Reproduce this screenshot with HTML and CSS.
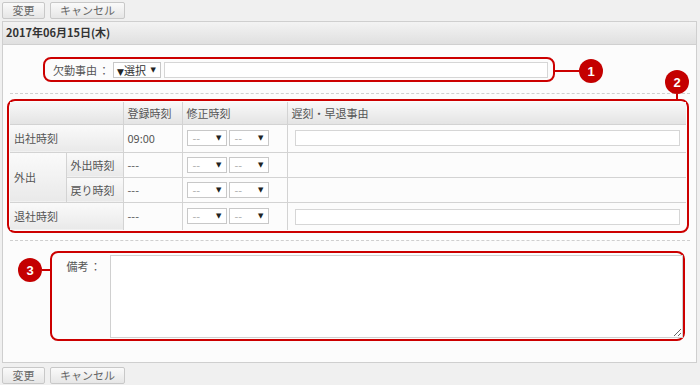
FILE: index.html
```html
<!DOCTYPE html>
<html lang="ja">

<head>
    <meta charset="UTF-8">
    <title>勤怠修正</title>
    <link rel="stylesheet" href="styles.css">
</head>

<body>
    <div class="toolbar">
        <button class="btn">変更</button>
        <button class="btn">キャンセル</button>
    </div>

    <div class="panel">
        <div class="panel-head">2017年06月15日(木)</div>
        <div class="panel-body">

            <div class="mark mark-1">
                <span class="field-label">欠勤事由 ：</span>
                <span class="sel sel-reason"><b>▼</b>選択<i>▼</i></span>
                <input class="text grow" type="text">
                <span class="callout callout-1">1</span>
            </div>

            <div class="dash"></div>

            <div class="mark mark-2">
                <table class="times">
                    <colgroup>
                        <col class="w-out">
                        <col class="w-kind">
                        <col class="w-reg">
                        <col class="w-fix">
                        <col>
                    </colgroup>
                    <tr class="head">
                        <th colspan="2"></th>
                        <th>登録時刻</th>
                        <th>修正時刻</th>
                        <th>遅刻・早退事由</th>
                    </tr>
                    <tr class="r-tall">
                        <th colspan="2" class="lbl">出社時刻</th>
                        <td>09:00</td>
                        <td>
                            <div class="pair">
                                <span class="sel sel-time">--<i>▼</i></span>
                                <span class="sel sel-time">--<i>▼</i></span>
                            </div>
                        </td>
                        <td class="c-why"><input class="text" type="text"></td>
                    </tr>
                    <tr class="r-short">
                        <th rowspan="2" class="lbl">外出</th>
                        <th class="lbl">外出時刻</th>
                        <td>---</td>
                        <td>
                            <div class="pair">
                                <span class="sel sel-time">--<i>▼</i></span>
                                <span class="sel sel-time">--<i>▼</i></span>
                            </div>
                        </td>
                        <td></td>
                    </tr>
                    <tr class="r-short">
                        <th class="lbl">戻り時刻</th>
                        <td>---</td>
                        <td>
                            <div class="pair">
                                <span class="sel sel-time">--<i>▼</i></span>
                                <span class="sel sel-time">--<i>▼</i></span>
                            </div>
                        </td>
                        <td></td>
                    </tr>
                    <tr class="r-tall">
                        <th colspan="2" class="lbl">退社時刻</th>
                        <td>---</td>
                        <td>
                            <div class="pair">
                                <span class="sel sel-time">--<i>▼</i></span>
                                <span class="sel sel-time">--<i>▼</i></span>
                            </div>
                        </td>
                        <td class="c-why"><input class="text" type="text"></td>
                    </tr>
                </table>
                <span class="callout callout-2">2</span>
            </div>

            <div class="dash dash-2"></div>

            <div class="mark mark-3">
                <span class="note-label">備考 ：</span>
                <textarea class="note"></textarea>
                <span class="callout callout-3">3</span>
            </div>

        </div>
    </div>

    <div class="toolbar toolbar-bottom">
        <button class="btn">変更</button>
        <button class="btn">キャンセル</button>
    </div>
</body>

</html>
```

FILE: styles.css
```css
* {
    box-sizing: border-box;
}

body {
    margin: 0;
    background-color: #f0f0f0;
    color: #555;
    font: 11px "Noto Sans CJK JP", "Noto Sans", sans-serif;
}

/* ボタン */
.toolbar {
    display: flex;
    gap: 5px;
    padding: 2px 2px 0 2px;
    height: 21px;
}

.toolbar-bottom {
    padding-top: 4px;
    height: auto;
}

.btn {
    height: 17px;
    padding: 0 9px;
    border: 1px solid #c8c8c8;
    border-radius: 2px;
    background: linear-gradient(#fafafa, #e6e6e6);
    color: #666;
    font: inherit;
    line-height: 15px;
}

.btn:first-child {
    width: 43px;
}

.btn:last-child {
    width: 75px;
}

/* パネル */
.panel {
    margin: 0 3px 0 2px;
    border: 1px solid #cfcfcf;
    background-color: #fcfcfc;
}

.panel-head {
    height: 23px;
    padding-left: 3px;
    border-bottom: 1px solid #d0d0d0;
    background: linear-gradient(#f3f3f3, #e0e0e0);
    color: #333;
    font-weight: bold;
    line-height: 21px;
}

.panel-body {
    padding: 12px 0 21px 0;
}

.dash {
    height: 1px;
    margin: 11px 6px 0 7px;
    border-top: 1px dashed #cfcfcf;
}

.dash-2 {
    margin-top: 7px;
}

/* 赤い枠 */
.mark {
    position: relative;
    border: 2px solid #cc0000;
    border-radius: 8px;
}

.mark-1 {
    display: flex;
    align-items: center;
    gap: 3px;
    width: 512px;
    height: 25px;
    margin-left: 40px;
    padding: 0 5px 0 8px;
}

.mark-2 {
    margin: 5px 7px 0 4px;
    padding: 1px;
}

.mark-3 {
    display: flex;
    align-items: flex-start;
    height: 90px;
    margin: 10px 11px 0 47px;
    padding-top: 2px;
}

/* 番号 */
.callout {
    position: absolute;
    width: 24px;
    height: 24px;
    border-radius: 50%;
    background-color: #c40000;
    color: #fff;
    font: bold 13px "Liberation Sans", sans-serif;
    display: flex;
    align-items: center;
    justify-content: center;
}

.callout::before {
    content: "";
    position: absolute;
    background-color: #cc0000;
}

.callout-1 {
    left: calc(100% + 26px);
    top: 0;
}

.callout-1::before {
    right: 100%;
    top: 11px;
    width: 26px;
    height: 2px;
}

.callout-2 {
    right: -2px;
    top: -31px;
}

.callout-2::before {
    top: 100%;
    left: 11px;
    width: 2px;
    height: 6px;
}

.callout-3 {
    left: -34px;
    top: 5px;
}

.callout-3::before {
    left: 100%;
    top: 11px;
    width: 9px;
    height: 2px;
}

/* 入力 */
.field-label {
    width: 57px;
    flex: none;
    white-space: nowrap;
    word-spacing: -1px;
}

.text {
    height: 16px;
    border: 1px solid #d6d6d6;
    background-color: #fff;
    margin: 0;
    padding: 0;
}

.grow {
    flex: 1;
}

.sel {
    position: relative;
    display: inline-block;
    height: 16px;
    border: 1px solid #c8c8c8;
    background-color: #fff;
    line-height: 14px;
    white-space: nowrap;
}

.sel b,
.sel i {
    color: #222;
    font: 7px "DejaVu Sans", sans-serif;
    vertical-align: 1px;
}

.sel b {
    font-size: 9px;
    vertical-align: 0;
}

.sel i {
    position: absolute;
    right: 4px;
    top: 0;
    line-height: 14px;
}

.sel-reason {
    width: 48px;
    padding-left: 3px;
    color: #333;
}

.sel-time {
    width: 40px;
    padding-left: 5px;
    color: #aaa;
}

.pair {
    display: flex;
    gap: 2px;
}

/* 表 */
.times {
    width: 100%;
    table-layout: fixed;
    border-collapse: collapse;
}

.w-out {
    width: 56px;
}

.w-kind {
    width: 57px;
}

.w-reg {
    width: 59px;
}

.w-fix {
    width: 105px;
}

.times th,
.times td {
    border: 1px solid #d3d3d3;
    padding: 0 0 0 4px;
    font-weight: normal;
    text-align: left;
    vertical-align: middle;
    white-space: nowrap;
}

.times tr:first-child th,
.times tr:first-child td {
    border-top: none;
}

.times tr > :first-child {
    border-left: none;
}

.times tr > :last-child {
    border-right: none;
}

.times tr:last-child th,
.times tr:last-child td {
    border-bottom: none;
}

.times .head {
    height: 22px;
}

.times .head th {
    background: linear-gradient(#f8f8f8, #e4e4e4);
}

.times .r-tall {
    height: 28px;
}

.times .r-short {
    height: 25px;
}

.times .lbl {
    background: linear-gradient(#fafafa, #e9e9e9);
}

.times .c-why {
    padding: 0 6px 0 7px;
}

.c-why .text {
    width: 100%;
}

/* 備考 */
.note-label {
    width: 58px;
    flex: none;
    padding: 3px 9px 0 0;
    text-align: right;
    white-space: nowrap;
    word-spacing: -1px;
}

.note {
    flex: 1;
    height: 83px;
    margin: 0;
    border: 1px solid #d0d0d0;
    background-color: #fff;
}
```
